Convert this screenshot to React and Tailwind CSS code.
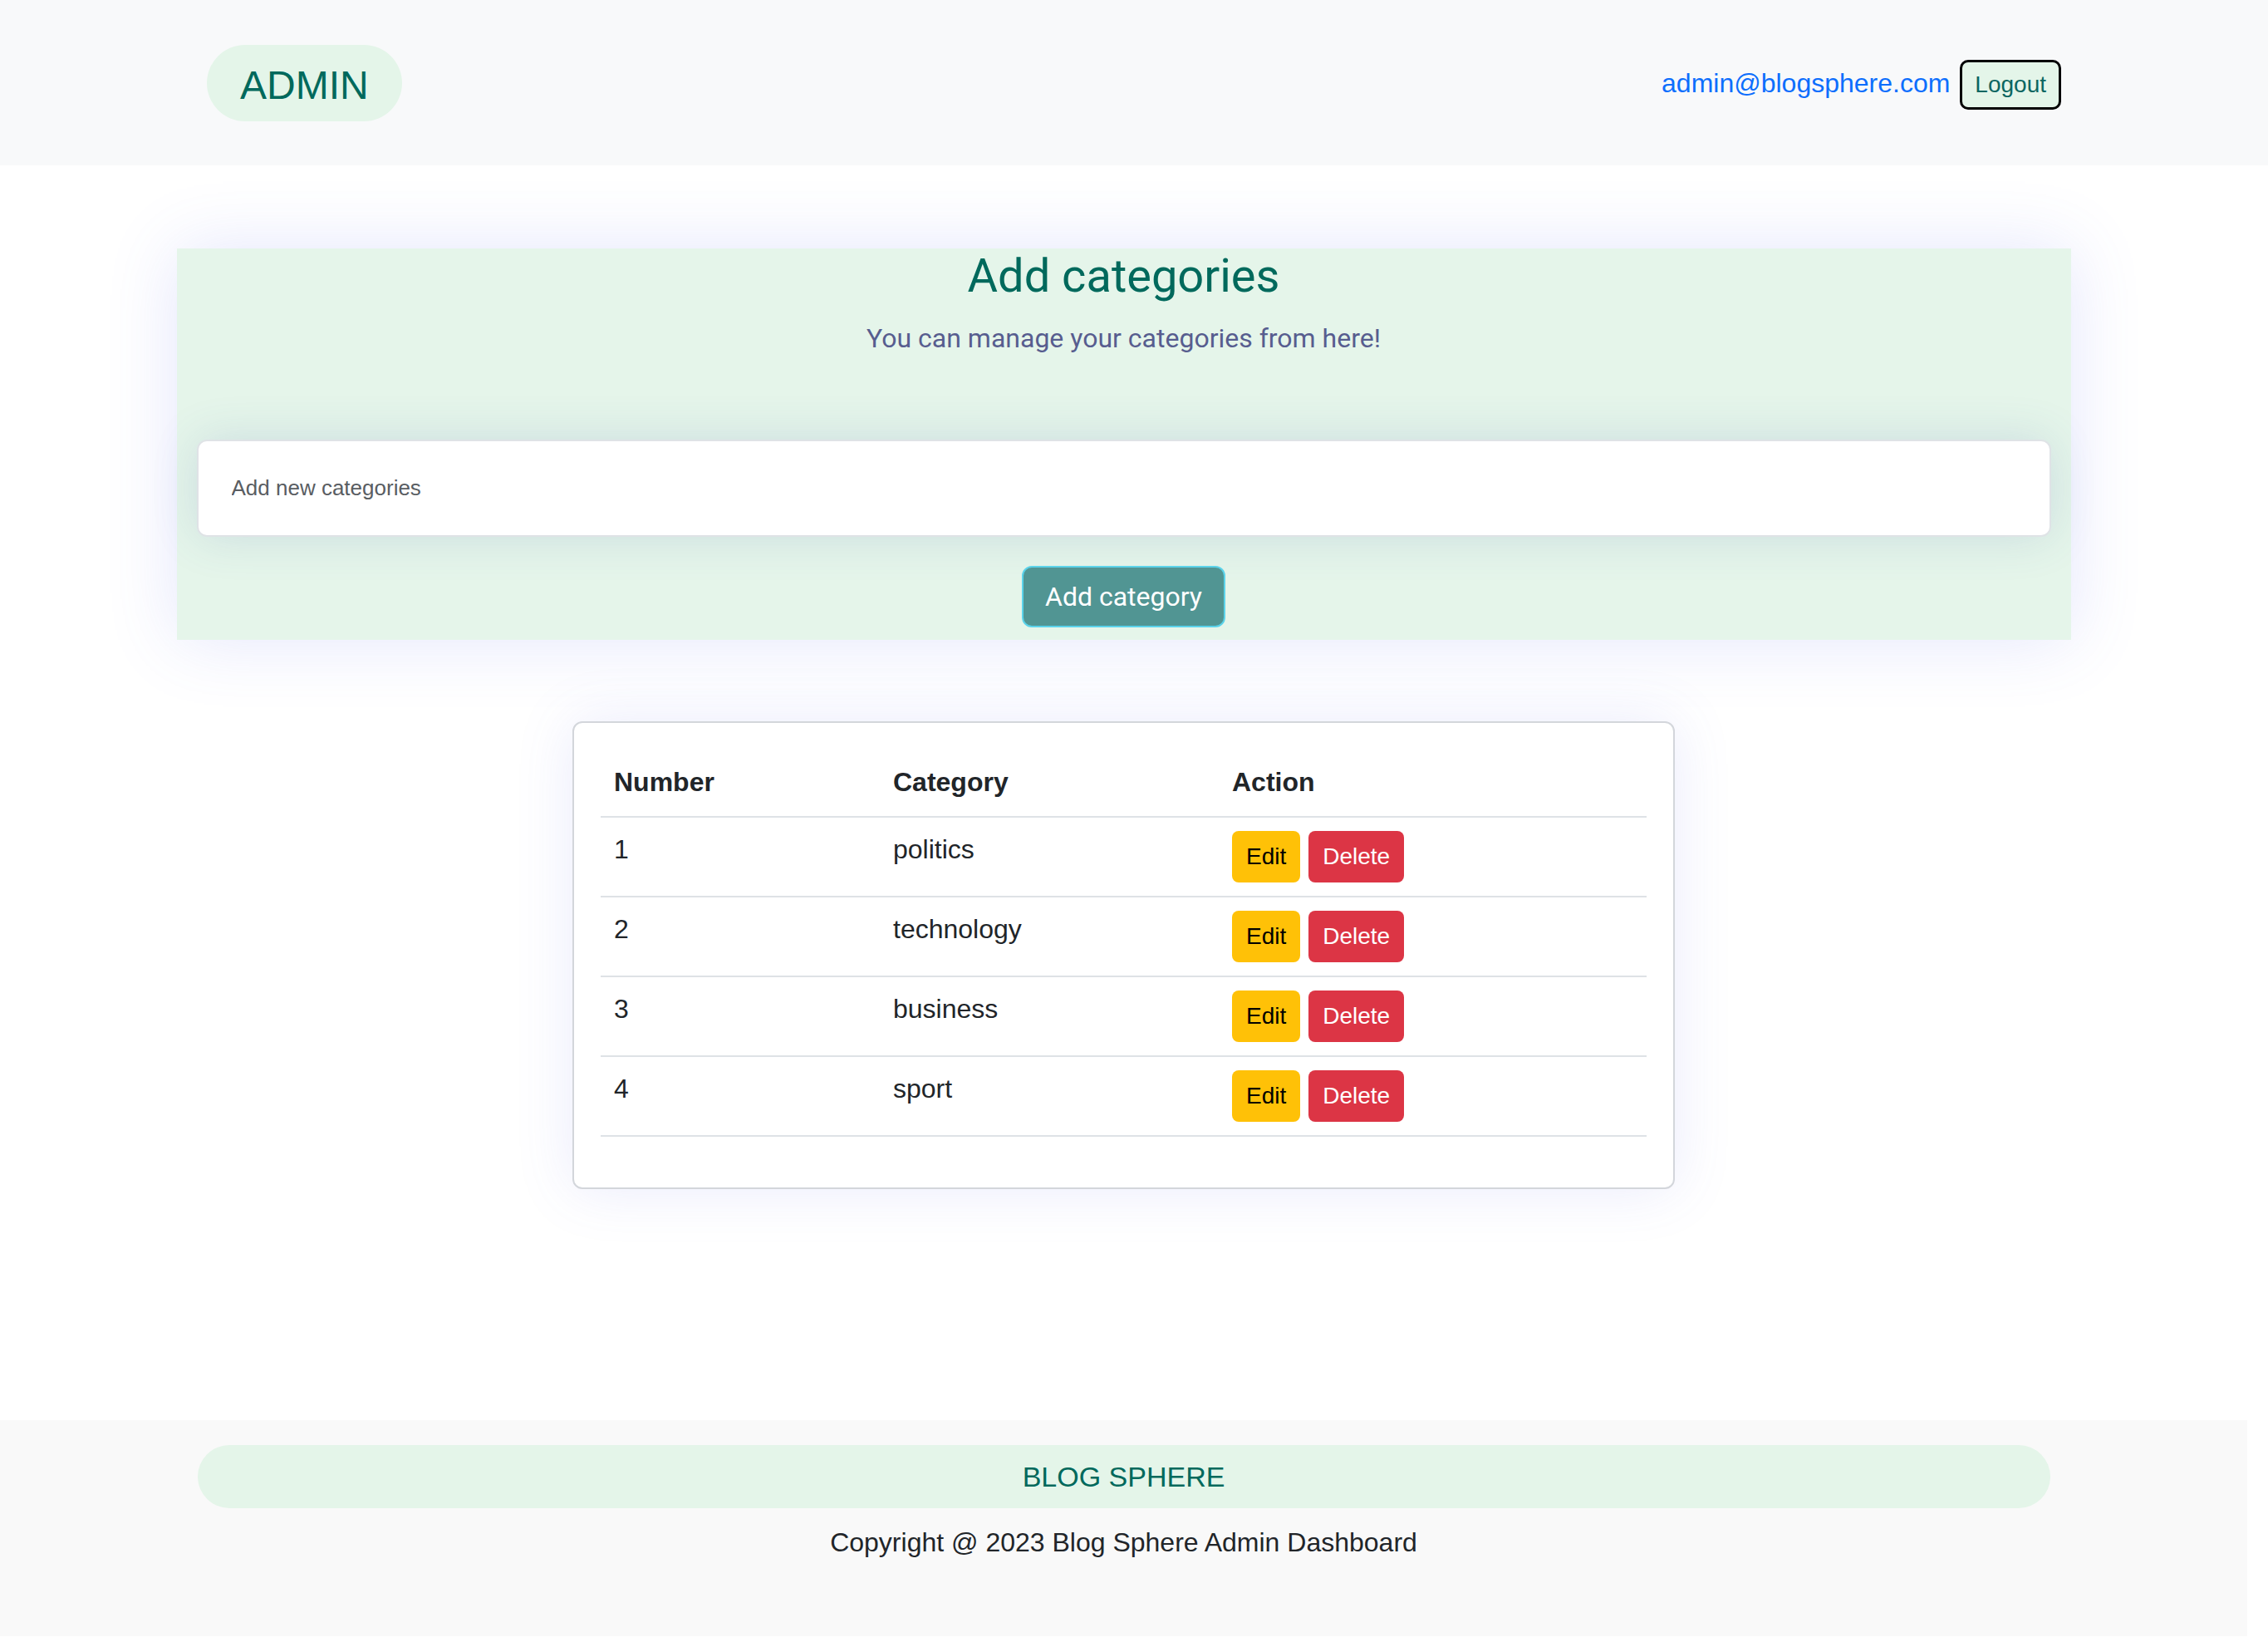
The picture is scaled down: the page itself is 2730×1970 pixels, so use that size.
import React from 'react'

const categories = [
  { id: 1, name: 'politics' },
  { id: 2, name: 'technology' },
  { id: 3, name: 'business' },
  { id: 4, name: 'sport' },
]

function Header() {
  return (
    <header className="h-[199px] bg-[#f8f9fa]">
      <div className="mx-auto flex h-full w-[2280px] items-center justify-between px-[24px]">
        <div className="rounded-full bg-[#e4f5e9] px-[40px] pb-[7px] pt-[13px] text-[48px] leading-[72px] text-[#00695c]">
          ADMIN
        </div>
        <div className="flex items-center gap-[12px]">
          <span className="text-[32px] leading-[48px] text-[#0d6efd]">admin@blogsphere.com</span>
          <button className="mt-[4px] rounded-[10px] border-[3px] border-black bg-[#e4f5e9] px-[15px] py-[6px] text-[28px] leading-[42px] text-[#0b6661]">
            Logout
          </button>
        </div>
      </div>
    </header>
  )
}

function AddCategoryCard() {
  return (
    <section className="mx-auto mt-[100px] flex w-[2280px] flex-col items-center bg-[#e5f5ea] px-[24px] pb-[15px] shadow-[0_0_80px_rgba(90,100,235,0.16)]">
      <h2 className="font-['Roboto',sans-serif] text-[56px] leading-[67px] text-[#00695c]">Add categories</h2>
      <p className="mt-[17px] font-['Roboto',sans-serif] text-[32px] leading-[48px] text-[#575d8f]">
        You can manage your categories from here!
      </p>
      <input
        type="text"
        placeholder="Add new categories"
        className="mt-[98px] h-[117px] w-full rounded-[12px] border-2 border-[#dfe3e6] bg-white px-[40px] text-[26px] text-[#212529] shadow-[0_0_55px_rgba(60,100,170,0.16)] outline-none placeholder:text-[#595d62]"
      />
      <button className="mt-[35px] h-[74px] rounded-[12px] border-2 border-[#5bd3ea] bg-[#519593] px-[26px] font-['Roboto',sans-serif] text-[32px] text-white">
        Add category
      </button>
    </section>
  )
}

function CategoryTable() {
  return (
    <section className="mx-auto mt-[98px] w-[1327px] rounded-[12px] border-2 border-[#d3d6db] bg-white px-[32px] pb-[29px] pt-[32px] shadow-[0_0_70px_rgba(90,100,235,0.13)]">
      <div className="mb-[32px] text-[32px] leading-[48px] text-[#212529]">
        <div className="grid h-[82px] grid-cols-[336px_408px_1fr] border-b-2 border-[#dee2e6] font-bold">
          <div className="px-[16px] pt-[15px]">Number</div>
          <div className="px-[16px] pt-[15px]">Category</div>
          <div className="px-[16px] pt-[15px]">Action</div>
        </div>
        {categories.map((cat) => (
          <div key={cat.id} className="grid h-[96px] grid-cols-[336px_408px_1fr] border-b-2 border-[#dee2e6]">
            <div className="px-[16px] pt-[14px]">{cat.id}</div>
            <div className="px-[16px] pt-[14px]">{cat.name}</div>
            <div className="flex items-start gap-[10px] px-[16px] pt-[16px]">
              <button className="h-[62px] rounded-[8px] bg-[#ffc107] px-[17px] text-[28px] text-black">Edit</button>
              <button className="h-[62px] rounded-[8px] bg-[#dc3545] px-[17px] text-[28px] text-white">Delete</button>
            </div>
          </div>
        ))}
      </div>
    </section>
  )
}

function Footer() {
  return (
    <footer className="mt-[278px] h-[260px] w-[2705px] bg-[#f9f9f9] pt-[30px]">
      <div className="mx-auto flex h-[76px] w-[2230px] items-center justify-center rounded-full bg-[#e4f5e9] text-[34px] text-[#00695c]">
        BLOG SPHERE
      </div>
      <p className="mt-[17px] text-center text-[32px] leading-[48px] text-[#212529]">
        Copyright @ 2023 Blog Sphere Admin Dashboard
      </p>
    </footer>
  )
}

export default function App() {
  return (
    <div className="min-h-screen overflow-hidden bg-white font-['Liberation_Sans',Arial,sans-serif] text-[#212529]">
      <Header />
      <main className="w-[2705px]">
        <AddCategoryCard />
        <CategoryTable />
      </main>
      <Footer />
    </div>
  )
}
